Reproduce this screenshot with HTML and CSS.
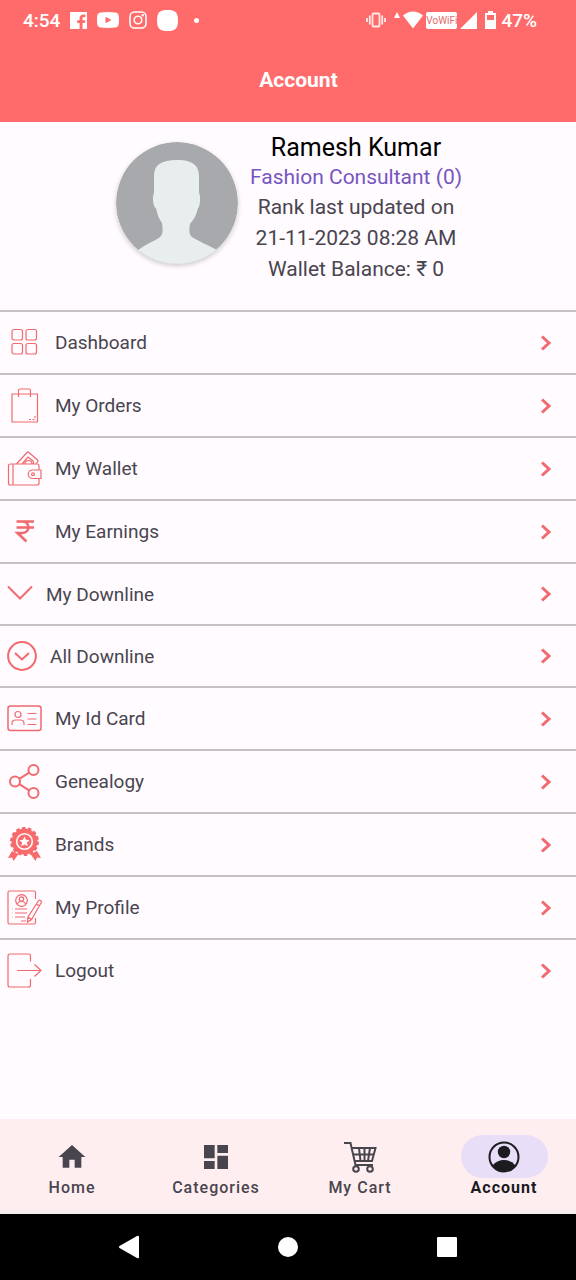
FILE: index.html
```html
<!DOCTYPE html>
<html lang="en">
<head>
  <meta charset="UTF-8">
  <title>Account</title>
  <meta name="viewport" content="width=device-width, initial-scale=1.0">
  <link rel="stylesheet" href="styles.css">
</head>
<body>
  <header class="header">
    <div class="status-bar">
      <div class="status-left">
        <span>4:54</span>
        <svg width="17" height="17" viewBox="0 0 17 17"><path fill="#fff" fill-rule="evenodd" d="M0 0h17v17h-4.500v-6h2.300l.4-2.800h-2.700V6.500c0-.9.4-1.300 1.400-1.300h1.400V2.600c-3.500-.6-5.700.6-5.700 3.500v2.100H7.200V11h2.400v6H0z"/></svg>
        <svg width="22" height="16" viewBox="0 0 22 16"><path fill="#fff" fill-rule="evenodd" d="M4 .5Q11-.3 18 .5q3.500.3 3.800 3.500.4 4 0 8-.3 3.200-3.800 3.500-7 .8-14 0Q.5 15.200.2 12q-.4-4 0-8Q.5.800 4 .5zM8.500 4.800v6.400L14.500 8z"/></svg>
        <svg width="18" height="18" viewBox="0 0 18 18" fill="none" stroke="#fff" stroke-width="1.600"><rect x="1" y="1" width="16" height="16" rx="4.500"/><circle cx="9" cy="9" r="3.800"/><circle cx="13.700" cy="4.300" r=".5"/></svg>
        <svg width="21" height="21" viewBox="0 0 21 21"><path fill="#fff" d="M10.500 0C18.500 0 21 2.500 21 10.500S18.500 21 10.500 21 0 18.500 0 10.500 2.500 0 10.500 0z"/></svg>
        <span class="dot"></span>
      </div>
      <div class="status-right">
        <svg width="20" height="16" viewBox="0 0 20 16" fill="none" stroke="#fff" stroke-opacity=".85" stroke-width="1.800"><rect x="6.500" y="1.500" width="7" height="13" rx="1"/><path d="M3.800 3.500v9M16.200 3.500v9M1 6v4M19 6v4"/></svg>
        <div class="signals">
          <svg width="6" height="18" viewBox="0 0 6 18"><path fill="#fff" d="M3 1l3 6H0z"/></svg>
          <svg width="20" height="18" viewBox="0 0 20 18"><path fill="#fff" d="M0 4.500Q10-3.500 20 4.500L10 17.500z"/></svg>
          <span class="vowifi">VoWiFi</span>
          <svg width="17" height="17" viewBox="0 0 17 17"><path fill="#fff" d="M17 0v17H0z"/></svg>
        </div>
        <div class="battery">
          <svg width="11" height="18" viewBox="0 0 11 18"><path fill="#fff" fill-rule="evenodd" d="M3 0h5v2h3v16H0V2h3zM2 4v5h7V4z"/></svg>
          <span>47%</span>
        </div>
      </div>
    </div>
    <h1 class="title">Account</h1>
  </header>

  <main class="content">
    <section class="profile">
      <svg class="avatar" viewBox="0 0 122 122">
        <circle cx="61" cy="61" r="61" fill="#a7a9ac"/>
        <path fill="#e8eeed" d="M22 108c8-6 17-9 22-13 3-2 3-7 2-14-3-4-5-9-6-15-3-1-4-12-2-15V34c0-11 7-16 23-16s22 6 22 16v17c2 3 1 14-1 15-1 6-4 11-8 16-1 6-1 11 2 13 6 4 16 8 25 13a61 61 0 0 1-79 0z"/>
      </svg>
      <div class="profile-info">
        <h2 class="name">Ramesh Kumar</h2>
        <p class="rank">Fashion Consultant (0)</p>
        <p>Rank last updated on</p>
        <p>21-11-2023 08:28 AM</p>
        <p>Wallet Balance: ₹ 0</p>
      </div>
    </section>

    <nav class="menu">
      <a href="#">
        <svg width="35" height="35" viewBox="0 0 35 35"><rect x="5" y="4.500" width="10.500" height="10.500" rx="2"/><rect x="19" y="4.500" width="10.500" height="10.500" rx="2"/><rect x="5" y="18.500" width="10.500" height="10.500" rx="2"/><rect x="19" y="18.500" width="10.500" height="10.500" rx="2"/></svg>
        <span>Dashboard</span>
        <svg class="arrow" viewBox="0 0 12 16"><path d="M2 1.500L9 8l-7 6.500"/></svg>
      </a>
      <a href="#">
        <svg width="35" height="35" viewBox="0 0 35 35"><path d="M5 6h25.500v28H5zM11.500 9V2.500q0-1.500 1.500-1.500h9q1.500 0 1.500 1.500V9M22 31.500h2m1.500 0h2M28 30v-2"/></svg>
        <span>My Orders</span>
        <svg class="arrow" viewBox="0 0 12 16"><path d="M2 1.500L9 8l-7 6.500"/></svg>
      </a>
      <a href="#">
        <svg width="35" height="35" viewBox="0 0 35 35"><path d="M32 18.500V15q0-2-2-2H3.500Q1.500 13 1.500 15v17q0 2 2 2H30q2 0 2-2v-4.500M6 13v21M34 19h-8.500a4.200 4.200 0 0 0 0 8.500H34zM9.500 13L20 1.500q1-1 2 0l8.500 7.500q1 1 0 2L29 13M15 13l6-7 5 4q1 1 0 3M18 13q0-3.500 4-3.500 2.500 0 3 3.500"/><circle cx="26" cy="23.200" r="1.400"/></svg>
        <span>My Wallet</span>
        <svg class="arrow" viewBox="0 0 12 16"><path d="M2 1.500L9 8l-7 6.500"/></svg>
      </a>
      <a href="#">
        <svg width="35" height="35" viewBox="0 0 35 35" class="bold"><path d="M9.500 7.500h17.500M9.500 13.500h17.500M10 7.500h5c8.500 0 8.500 11.500 0 11.500h-4.500L19.500 27.500"/></svg>
        <span>My Earnings</span>
        <svg class="arrow" viewBox="0 0 12 16"><path d="M2 1.500L9 8l-7 6.500"/></svg>
      </a>
      <a href="#" class="short">
        <svg width="26" height="18" viewBox="0 0 26 18" class="medium"><path d="M1 1.500l12 12 12-12"/></svg>
        <span>My Downline</span>
        <svg class="arrow" viewBox="0 0 12 16"><path d="M2 1.500L9 8l-7 6.500"/></svg>
      </a>
      <a href="#" class="short">
        <svg width="30" height="30" viewBox="0 0 30 30" class="medium"><circle cx="15" cy="15" r="13.900"/><path d="M8 12l7 6.500 7-6.500"/></svg>
        <span>All Downline</span>
        <svg class="arrow" viewBox="0 0 12 16"><path d="M2 1.500L9 8l-7 6.500"/></svg>
      </a>
      <a href="#">
        <svg width="35" height="35" viewBox="0 0 35 35"><rect x="1" y="5" width="33" height="24.500" rx="2.500" stroke-width="1.500"/><circle cx="11" cy="13.500" r="3"/><path d="M5 24v-1.500q0-3.500 3.500-3.500h5q3.500 0 3.500 3.500V24M20.500 12.500h9M20.500 18h9M20.500 23.500h9"/></svg>
        <span>My Id Card</span>
        <svg class="arrow" viewBox="0 0 12 16"><path d="M2 1.500L9 8l-7 6.500"/></svg>
      </a>
      <a href="#">
        <svg width="35" height="35" viewBox="0 0 35 35" class="medium"><circle cx="26.500" cy="6" r="5"/><circle cx="8" cy="17.500" r="5"/><circle cx="26.500" cy="29" r="5"/><path d="M12.300 14.900l9.900-6.200M12.300 20.100l9.900 6.200"/></svg>
        <span>Genealogy</span>
        <svg class="arrow" viewBox="0 0 12 16"><path d="M2 1.500L9 8l-7 6.500"/></svg>
      </a>
      <a href="#">
        <svg width="35" height="35" viewBox="0 0 35 35">
          <path class="solid" d="M5 24l-4 7 4-.500 1.500 3.500 5-7zM30 24l4 7-4-.500-1.500 3.500-5-7z"/>
          <circle class="solid" cx="17.500" cy="14.500" r="13"/>
          <circle cx="17.500" cy="14.500" r="13" stroke-width="3" stroke-dasharray="3.500 2.334"/>
          <circle class="cut" cx="17.500" cy="14.500" r="7.800"/>
          <path class="star" d="M17.500 9.500l1.500 3.300 3.600.4-2.700 2.400.8 3.600-3.200-1.800-3.200 1.800.8-3.600-2.700-2.400 3.600-.4z"/>
        </svg>
        <span>Brands</span>
        <svg class="arrow" viewBox="0 0 12 16"><path d="M2 1.500L9 8l-7 6.500"/></svg>
      </a>
      <a href="#">
        <svg width="35" height="35" viewBox="0 0 35 35"><path d="M28.500 9V2.500Q28.500 1 27 1H2.500Q1 1 1 2.500v30Q1 34 2.500 34H27q1.500 0 1.500-1.500V28M31 11.500q1-2 2.500-1t.5 2.500L24.500 29.500 20.500 32l.5-5zM29.500 14l3 2M21 27l3.500 2.500M8 19h12M8 23h12M8 27h10M5.500 19h.5M5.500 23h.5M5.500 27h.5M14 31h5"/><circle cx="14.500" cy="10.500" r="5.800"/><circle cx="14.500" cy="9" r="2.200"/><path d="M10.500 14.500q0-3 4-3t4 3"/></svg>
        <span>My Profile</span>
        <svg class="arrow" viewBox="0 0 12 16"><path d="M2 1.500L9 8l-7 6.500"/></svg>
      </a>
      <a href="#">
        <svg width="35" height="35" viewBox="0 0 35 35"><path d="M23.500 8.500V3q0-2-2-2H3Q1 1 1 3v29q0 2 2 2h18.500q2 0 2-2v-6M10 17.500h24M27.500 11.500l6.500 6-6.500 6"/></svg>
        <span>Logout</span>
        <svg class="arrow" viewBox="0 0 12 16"><path d="M2 1.500L9 8l-7 6.500"/></svg>
      </a>
    </nav>
  </main>

  <nav class="bottom-nav">
    <a href="#">
      <span class="pill"><svg width="32" height="32" viewBox="0 0 24 24"><path fill="currentColor" d="M10 20v-6h4v6h5v-8h3L12 3 2 12h3v8z"/></svg></span>
      Home
    </a>
    <a href="#">
      <span class="pill"><svg width="32" height="32" viewBox="0 0 24 24"><path fill="currentColor" d="M3 13h8V3H3v10zm0 8h8v-6H3v6zm10 0h8V11h-8v10zm0-18v6h8V3h-8z"/></svg></span>
      Categories
    </a>
    <a href="#">
      <span class="pill"><svg width="34" height="32" viewBox="0 0 34 32" fill="none" stroke="currentColor" stroke-width="2"><path d="M1 2h6.500l5 22H30M9 7h23.500l-3.500 13H12M10 13.500h21M16 7l1.500 13M21.500 7v13M27 7l-2 13"/><circle cx="13" cy="28" r="2.800"/><circle cx="27" cy="28" r="2.800"/></svg></span>
      My Cart
    </a>
    <a href="#" class="active">
      <span class="pill"><svg width="32" height="32" viewBox="0 0 32 32"><circle cx="16" cy="16" r="14.500" fill="none" stroke="currentColor" stroke-width="2"/><circle cx="16" cy="11" r="6.200" fill="currentColor"/><path fill="currentColor" d="M4.500 24.500Q9 19 16 19t11.500 5.500A14.500 14.500 0 0 1 4.500 24.500z"/></svg></span>
      Account
    </a>
  </nav>

  <div class="system-nav">
    <button aria-label="Back"><svg width="22" height="24" viewBox="0 0 22 24"><path fill="#fff" d="M19 1q2-1 2 1v20q0 2-2 1L1.500 13q-1.500-1 0-2z"/></svg></button>
    <button aria-label="Home"><svg width="22" height="22" viewBox="0 0 22 22"><circle cx="11" cy="11" r="10" fill="#fff"/></svg></button>
    <button aria-label="Recent apps"><svg width="22" height="22" viewBox="0 0 22 22"><rect x="1" y="1" width="20" height="20" rx="1" fill="#fff"/></svg></button>
  </div>
</body>
</html>
```
FILE: styles.css
```css
* {
  box-sizing: border-box;
}

body {
  margin: 0;
  min-height: 100vh;
  display: flex;
  flex-direction: column;
  background-color: #fffbff;
  color: #49454f;
  font-family: Roboto, sans-serif;
}

h1, h2, p {
  margin: 0;
}

a {
  color: inherit;
  text-decoration: none;
}

svg {
  flex-shrink: 0;
}

/* Header */
.header {
  background-color: #ff6b6b;
  color: #fff;
}

.status-bar {
  display: flex;
  justify-content: space-between;
  height: 40px;
  padding: 0 39px 0 23px;
  font-size: 19px;
  font-weight: 500;
}

.status-left,
.status-right,
.signals,
.battery {
  display: flex;
  align-items: center;
}

.status-left {
  gap: 10px;
}

.status-right {
  gap: 8px;
}

.signals {
  gap: 3px;
}

.battery {
  gap: 5px;
}

.dot {
  width: 5px;
  height: 5px;
  margin-left: 6px;
  border-radius: 50%;
  background-color: #fff;
}

.vowifi {
  border-radius: 2px;
  background-color: #fff;
  color: #e56a6a;
  font-size: 10px;
  font-weight: 400;
  line-height: 17px;
}

.title {
  padding: 24px 0 26px 21px;
  font-size: 21px;
  font-weight: 700;
  line-height: 32px;
  text-align: center;
}

/* Profile */
.content {
  flex: 1;
}

.profile {
  display: flex;
  justify-content: center;
  gap: 12px;
  padding: 10px 0 25px 2px;
}

.avatar {
  width: 122px;
  height: 122px;
  margin-top: 10px;
  border-radius: 50%;
  box-shadow: 0 2px 5px rgba(0, 0, 0, 0.2);
}

.profile-info {
  font-size: 21px;
  line-height: 31px;
  text-align: center;
}

.name {
  color: #000;
  font-size: 25px;
  font-weight: 400;
}

.rank {
  color: #7755c0;
  line-height: 29px;
}

/* Menu */
.menu a {
  display: flex;
  align-items: center;
  gap: 13px;
  height: 63px;
  padding: 0 24px 0 7px;
  border-top: 2px solid #c6c0c7;
  font-size: 19px;
}

.menu a.short {
  height: 62px;
}

.menu svg {
  fill: none;
  stroke: #f06a6e;
  stroke-width: 1.2;
}

.menu .medium {
  stroke-width: 2;
}

.menu .bold {
  stroke-width: 2.6;
}

.menu .arrow {
  width: 12px;
  height: 16px;
  margin-left: auto;
  stroke-width: 3;
}

.menu .solid {
  fill: #f96a6a;
  stroke: none;
}

.menu .cut {
  stroke: #fffbff;
  stroke-width: 1.6;
}

.menu .star {
  fill: #fffbff;
  stroke: none;
}

/* Bottom navigation */
.bottom-nav {
  display: flex;
  padding: 16px 0 11px;
  border-bottom: 5px solid #f8eeee;
  background-color: #ffeef0;
}

.bottom-nav a {
  flex: 1;
  display: flex;
  flex-direction: column;
  align-items: center;
  font-size: 16px;
  font-weight: 500;
  letter-spacing: 1px;
  line-height: 20px;
}

.bottom-nav .active {
  color: #1c1b1f;
  font-weight: 700;
}

.pill {
  display: flex;
  align-items: center;
  justify-content: center;
  width: 87px;
  height: 43px;
  border-radius: 22px;
}

.active .pill {
  background-color: #e8def8;
}

.system-nav {
  display: flex;
  padding: 0 49px;
  background-color: #000;
}

.system-nav button {
  flex: 1;
  display: flex;
  align-items: center;
  justify-content: center;
  height: 66px;
  padding: 0;
  border: none;
  background: none;
}
```
